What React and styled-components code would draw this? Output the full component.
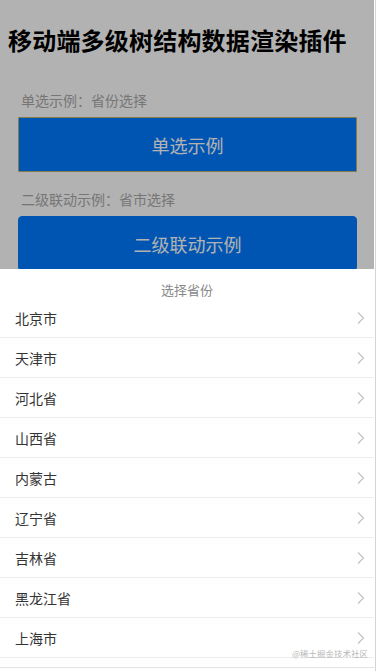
import React from 'react';
import styled, { createGlobalStyle } from 'styled-components';

const GlobalStyle = createGlobalStyle`
  html, body {
    margin: 0;
    padding: 0;
    background: #fff;
  }
  body {
    font-family: "Noto Sans CJK SC", "Noto Sans", sans-serif;
  }
  * { box-sizing: border-box; }
`;

const Frame = styled.div`
  display: flex;
  width: 377px;
  height: 671px;
  overflow: hidden;
`;

const Viewport = styled.div`
  position: relative;
  flex: 0 0 374px;
  height: 671px;
  overflow: hidden;
  background: #fff;
`;

const EdgeStrip = styled.div`
  flex: 1;
  background: #fff;
  display: flex;
  justify-content: center;
  &::before {
    content: '';
    width: 1px;
    background: #d4d4d4;
  }
`;

const Page = styled.div`
  padding: 23px 8px 0;
`;

const Title = styled.h1`
  margin: 0 0 33px;
  font-size: 24px;
  line-height: 34px;
  font-weight: 700;
  color: #000;
  letter-spacing: 0.2px;
`;

const Demo = styled.div`
  padding: 0 10px;
  margin-bottom: 17px;
`;

const DemoLabel = styled.div`
  padding-left: 3px;
  font-size: 14px;
  line-height: 20px;
  color: #aaa;
  margin-bottom: 7px;
`;

const DemoButton = styled.button`
  display: block;
  width: 339px;
  height: 55px;
  border: 1px solid ${p => (p.$focused ? '#bdb36c' : '#007aff')};
  border-radius: ${p => (p.$focused ? '1px' : '4px')};
  background: #007aff;
  color: #fff;
  font-family: inherit;
  font-size: 18px;
  padding: 0;
`;

const Mask = styled.div`
  position: absolute;
  inset: 0;
  background: rgba(0, 0, 0, 0.3);
`;

const Sheet = styled.div`
  position: absolute;
  left: 0;
  right: 0;
  bottom: 0;
  height: 402px;
  background: #fff;
  display: flex;
  flex-direction: column;
`;

const SheetTitle = styled.div`
  height: 29px;
  display: flex;
  align-items: center;
  justify-content: center;
  padding-top: 11px;
  font-size: 13px;
  color: #888;
`;

const List = styled.ul`
  list-style: none;
  margin: 0;
  padding: 0;
  height: 370px;
  overflow: hidden;
  border-bottom: 1px solid #e2e2e2;
`;

const Row = styled.li`
  height: 40px;
  display: flex;
  align-items: center;
  justify-content: space-between;
  padding: 0 8px 0 15px;
  border-bottom: 1px solid #ececec;
  font-size: 14px;
  color: #333;
`;

const Watermark = styled.div`
  position: absolute;
  right: 6px;
  bottom: 12px;
  font-size: 8.5px;
  color: #b8b8b8;
`;

const Chevron = () => (
  <svg width="10" height="16" viewBox="0 0 10 16" fill="none">
    <path d="M2 2.5 L7.5 8 L2 13.5" stroke="#c0c0c0" strokeWidth="1.1" />
  </svg>
);

const provinces = ['北京市', '天津市', '河北省', '山西省', '内蒙古', '辽宁省', '吉林省', '黑龙江省', '上海市'];

export default function App() {
  return (
    <Frame>
      <GlobalStyle />
      <Viewport>
        <Page>
          <Title>移动端多级树结构数据渲染插件</Title>
          <Demo>
            <DemoLabel>单选示例：省份选择</DemoLabel>
            <DemoButton $focused>单选示例</DemoButton>
          </Demo>
          <Demo>
            <DemoLabel>二级联动示例：省市选择</DemoLabel>
            <DemoButton>二级联动示例</DemoButton>
          </Demo>
        </Page>
        <Mask />
        <Sheet>
          <SheetTitle>选择省份</SheetTitle>
          <List>
            {provinces.map(name => (
              <Row key={name}>
                <span>{name}</span>
                <Chevron />
              </Row>
            ))}
          </List>
        </Sheet>
        <Watermark>@稀土掘金技术社区</Watermark>
      </Viewport>
      <EdgeStrip />
    </Frame>
  );
}
